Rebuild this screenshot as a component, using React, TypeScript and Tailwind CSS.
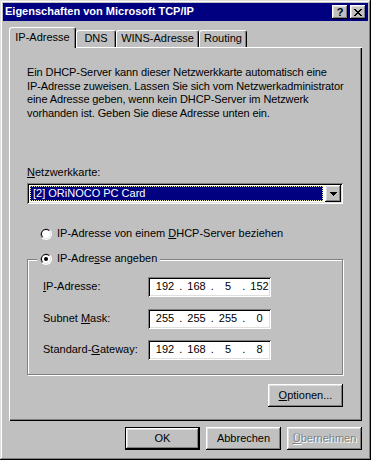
import React from "react";

const raised =
  "shadow-[inset_-1px_-1px_#000,inset_1px_1px_#fff,inset_-2px_-2px_#808080,inset_2px_2px_#dfdfdf]";
const sunken =
  "shadow-[inset_1px_1px_#808080,inset_-1px_-1px_#fff,inset_2px_2px_#000,inset_-2px_-2px_#dfdfdf]";

function Radio({ checked }: { checked?: boolean }) {
  return (
    <svg width="12" height="12" viewBox="0 0 12 12" className="shrink-0">
      <circle cx="6" cy="6" r="6" fill="#fff" />
      <path d="M1.76 10.24A6 6 0 0 1 10.24 1.76Z" fill="#808080" />
      <circle cx="6" cy="6" r="5" fill="#dfdfdf" />
      <path d="M2.46 9.54A5 5 0 0 1 9.54 2.46Z" fill="#000" />
      <circle cx="6" cy="6" r="4" fill="#fff" />
      {checked && <circle cx="6" cy="6" r="2" fill="#000" />}
    </svg>
  );
}

function CloseGlyph() {
  // 8x7 pixel cross, like the old caption buttons
  return (
    <svg width="8" height="7" viewBox="0 0 8 7" shapeRendering="crispEdges">
      <path
        d="M0 0h2v1H0zM6 0h2v1H6zM1 1h2v1H1zM5 1h2v1H5zM2 2h4v1H2zM3 3h2v1H3zM2 4h4v1H2zM1 5h2v1H1zM5 5h2v1H5zM0 6h2v1H0zM6 6h2v1H6z"
        fill="#000"
      />
    </svg>
  );
}

function Button({
  children,
  isDefault,
  disabled,
}: {
  children: React.ReactNode;
  isDefault?: boolean;
  disabled?: boolean;
}) {
  if (isDefault) {
    return (
      <div className="w-[75px] h-[23px] border border-black">
        <div className={`h-full flex items-center justify-center ${raised}`}>{children}</div>
      </div>
    );
  }
  return (
    <div
      className={`w-[75px] h-[23px] flex items-center justify-center ${raised} ${
        disabled ? "text-[#808080] [text-shadow:1px_1px_0_#fff]" : ""
      }`}
    >
      {children}
    </div>
  );
}

function IpField({ parts }: { parts: string[] }) {
  return (
    <div className={`h-[20px] w-[123px] bg-white flex items-center pl-[4.5px] ${sunken}`}>
      {parts.map((p, i) => (
        <React.Fragment key={i}>
          {i > 0 && <span className="w-[6.5px] shrink-0 text-center">.</span>}
          <span className="w-[25px] shrink-0 text-center">{p}</span>
        </React.Fragment>
      ))}
    </div>
  );
}

export default function App() {
  const fields = [
    { label: <><u>I</u>P-Adresse:</>, parts: ["192", "168", "5", "152"] },
    { label: <>Subnet <u>M</u>ask:</>, parts: ["255", "255", "255", "0"] },
    { label: <>Standard-<u>G</u>ateway:</>, parts: ["192", "168", "5", "8"] },
  ];

  return (
    <div
      className={`w-[371px] h-[460px] bg-[#c0c0c0] p-[3px] flex flex-col text-[11px] leading-[13.5px] text-black font-['Liberation_Sans',Arial,sans-serif] shadow-[inset_-1px_-1px_#000,inset_1px_1px_#dfdfdf,inset_-2px_-2px_#808080,inset_2px_2px_#fff]`}
    >
      {/* title bar */}
      <div className="h-[18px] bg-[#000080] flex items-center justify-between pl-[2px] pr-[2px]">
        <span className="text-white font-bold whitespace-nowrap">
          Eigenschaften von Microsoft TCP/IP
        </span>
        <div className="flex gap-[2px]">
          <div className={`w-[16px] h-[14px] bg-[#c0c0c0] flex items-center justify-center font-bold leading-none pt-[1px] ${raised}`}>
            ?
          </div>
          <div className={`w-[16px] h-[14px] bg-[#c0c0c0] flex items-center justify-center ${raised}`}>
            <CloseGlyph />
          </div>
        </div>
      </div>

      <div className="px-[6px] pt-[6px] flex flex-col">
        {/* tabs */}
        <div className="h-[20px] flex items-end">
          <div className="relative z-10 -mb-[1px] w-[67px] h-[21px] bg-[#c0c0c0] border-l border-t border-r border-white border-r-black rounded-t-[3px] shadow-[inset_-1px_0_#808080] flex items-center justify-center pb-[1px]">
            IP-Adresse
          </div>
          {[
            ["DNS", "w-[40px]"],
            ["WINS-Adresse", "w-[83px]"],
            ["Routing", "w-[48px]"],
          ].map(([t, w]) => (
            <div
              key={t}
              className={`${w} h-[17px] border-l border-t border-r border-white border-r-black rounded-t-[3px] shadow-[inset_-1px_0_#808080] flex items-center justify-center`}
            >
              {t}
            </div>
          ))}
        </div>

        {/* panel */}
        <div className="h-[374px] pl-[18px] pr-[19px] pt-[19px] flex flex-col shadow-[inset_1px_1px_#fff,inset_-1px_-1px_#000,inset_-2px_-2px_#808080]">
          <p className="whitespace-nowrap tracking-[-0.1px]">
            Ein DHCP-Server kann dieser Netzwerkkarte automatisch eine
            <br />
            IP-Adresse zuweisen. Lassen Sie sich vom Netzwerkadministrator
            <br />
            eine Adresse geben, wenn kein DHCP-Server im Netzwerk
            <br />
            vorhanden ist. Geben Sie diese Adresse unten ein.
          </p>

          <div className="mt-[45.5px]">
            <u>N</u>etzwerkkarte:
          </div>

          <div className={`mt-[4px] h-[21px] bg-white flex p-[2px] ${sunken}`}>
            <div className="flex-1 m-[1px] mr-[2px] bg-[#000080] border border-dotted border-[#e8e8a0] text-white pl-[2px] flex items-center">
              [2] ORiNOCO PC Card
            </div>
            <div className={`w-[16px] bg-[#c0c0c0] flex items-center justify-center ${raised}`}>
              <svg width="7" height="4" viewBox="0 0 7 4" shapeRendering="crispEdges">
                <path d="M0 0h7v1H0zM1 1h5v1H1zM2 2h3v1H2zM3 3h1v1H3z" fill="#000" />
              </svg>
            </div>
          </div>

          <div className="mt-[22px] h-[16px] flex items-center gap-[5px] pl-[13px]">
            <Radio />
            <span>
              IP-Adresse von einem <u>D</u>HCP-Server beziehen
            </span>
          </div>

          {/* group box */}
          <div className="relative mt-[17px] border border-[#808080] shadow-[1px_1px_0_#fff,inset_1px_1px_0_#fff] pl-[15px] pt-[17px] pb-[14px]">
            <div className="absolute -top-[9px] left-[9px] h-[16px] px-[3px] bg-[#c0c0c0] flex items-center gap-[5px]">
              <Radio checked />
              <span>
                IP-Adre<u>s</u>se angeben
              </span>
            </div>
            <div className="flex flex-col gap-[11.5px]">
              {fields.map((f, i) => (
                <div key={i} className="flex items-center">
                  <span className="w-[105px]">{f.label}</span>
                  <IpField parts={f.parts} />
                </div>
              ))}
            </div>
          </div>

          <div className="mt-[9px] flex justify-end">
            <Button>
              <span>
                <u>O</u>ptionen...
              </span>
            </Button>
          </div>
        </div>

        {/* dialog buttons */}
        <div className="mt-[6px] flex justify-end gap-[6px]">
          <Button isDefault>OK</Button>
          <Button>Abbrechen</Button>
          <Button disabled>
            <span>
              <u>Ü</u>bernehmen
            </span>
          </Button>
        </div>
      </div>
    </div>
  );
}
